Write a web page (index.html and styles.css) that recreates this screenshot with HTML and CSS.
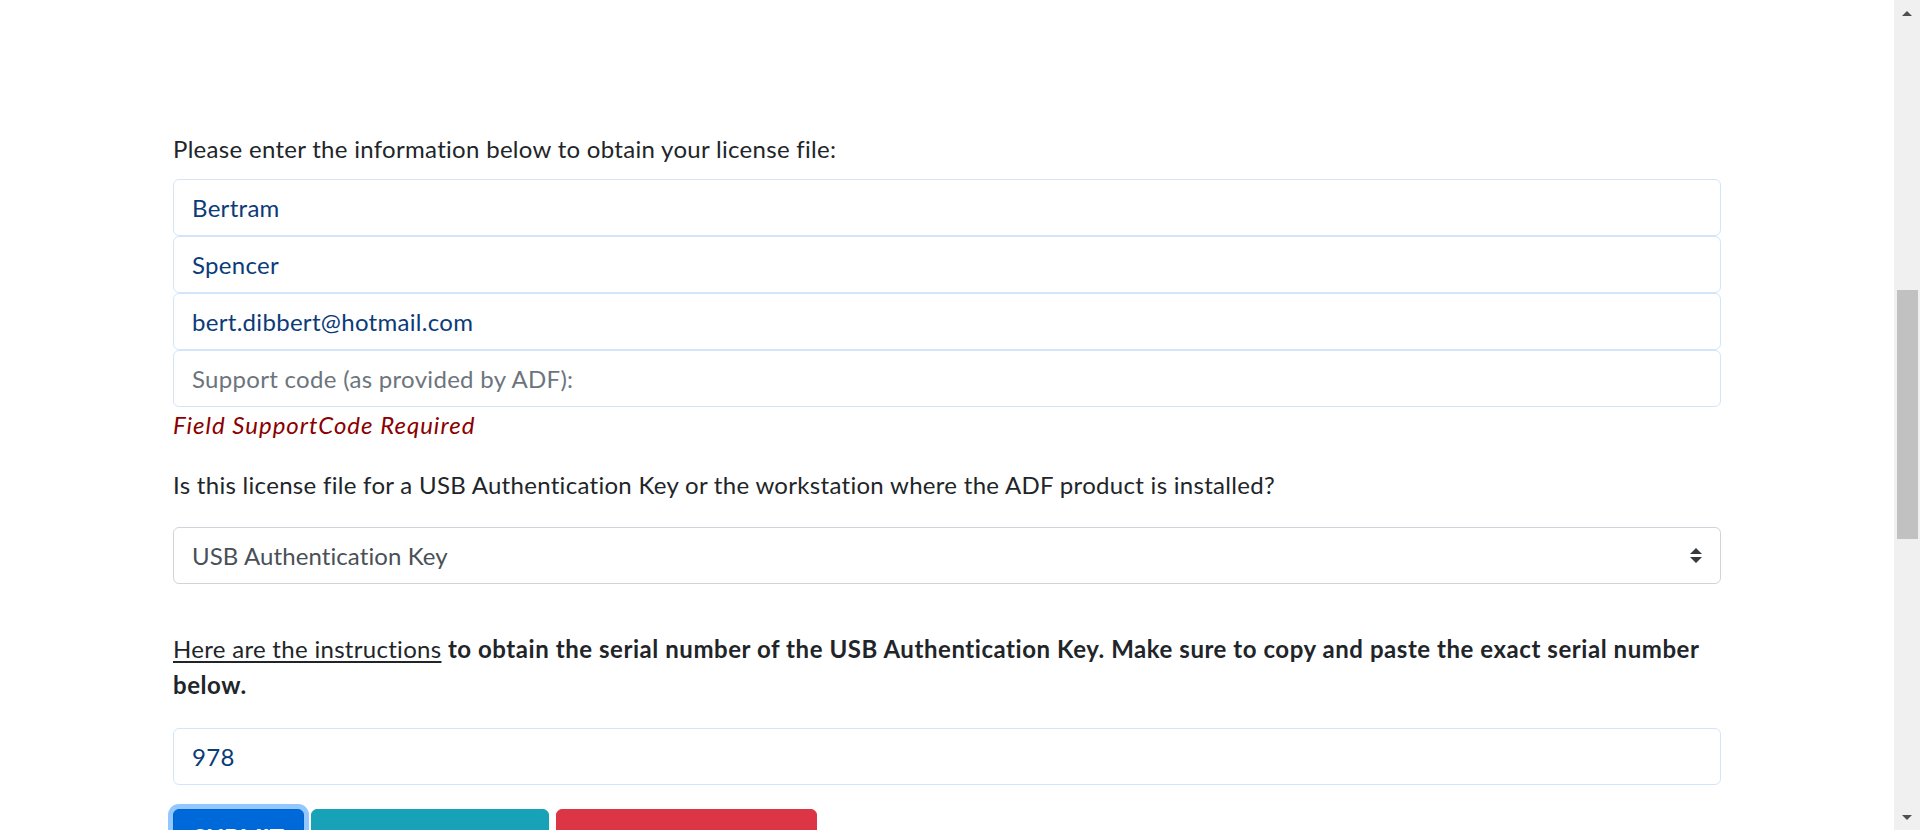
FILE: index.html
```html
<!DOCTYPE html>
<html lang="en">
<head>
<meta charset="utf-8">
<title>License request</title>
<link rel="stylesheet" href="styles.css">
</head>
<body>
<div class="screen">
  <main class="page">
    <form class="license-form">
      <label class="intro">Please enter the information below to obtain your license file:</label>
      <div class="stack">
        <input class="field" type="text" value="Bertram">
        <input class="field" type="text" value="Spencer">
        <input class="field" type="text" value="bert.dibbert@hotmail.com">
        <input class="field" type="text" placeholder="Support code (as provided by ADF):">
      </div>
      <p class="error">Field SupportCode Required</p>
      <p class="question">Is this license file for a USB Authentication Key or the workstation where the ADF product is installed?</p>
      <div class="select">
        <span class="select-value">USB Authentication Key</span>
        <svg class="select-arrow" width="12" height="15" viewBox="0 0 4 5"><path d="M2 0L0 2h4zm0 5L0 3h4z" fill="#343a40"/></svg>
      </div>
      <p class="instructions"><a class="link" href="#">Here are the instructions</a> <strong>to obtain the serial number of the USB Authentication Key. Make sure to copy and paste the exact serial number below.</strong></p>
      <input class="field serial" type="text" value="978">
      <div class="actions">
        <button class="btn btn-primary" type="button">SUBMIT</button>
        <button class="btn btn-info" type="button"><span class="btn-low">INSTRUCTIONS</span></button>
        <button class="btn btn-danger" type="button"><span class="btn-low">CANCEL</span></button>
      </div>
    </form>
  </main>
  <div class="scrollbar">
    <div class="sb-arrow">
      <svg width="10" height="5" viewBox="0 0 10 5"><path d="M0 5L5 0L10 5z" fill="#505050"/></svg>
    </div>
    <div class="sb-track"><div class="sb-thumb"></div></div>
    <div class="sb-arrow">
      <svg width="10" height="5" viewBox="0 0 10 5"><path d="M0 0L10 0L5 5z" fill="#505050"/></svg>
    </div>
  </div>
</div>
</body>
</html>
```
FILE: styles.css
```css
* { box-sizing: border-box; }
html, body { margin: 0; padding: 0; background: #fff; }
body {
  font-family: Lato, "Noto Sans", sans-serif;
  font-size: 24px;
  line-height: 36px;
  letter-spacing: 0.3px;
  color: #212529;
}
.screen {
  display: flex;
  height: 830px;
  overflow: hidden;
}
.page {
  flex: 1;
  padding: 131px 173px 0 173px;
  overflow: hidden;
}
.license-form { display: flex; flex-direction: column; }
.intro { display: block; margin-bottom: 12px; }
.stack { display: flex; flex-direction: column; }
.field {
  display: block;
  width: 100%;
  height: 57px;
  padding: 0 18px;
  font: inherit;
  font-size: 24px;
  letter-spacing: 0.3px;
  color: #0b3b78;
  background: #fff;
  border: 1px solid #d2e6fa;
  border-radius: 6px;
  outline: none;
}
.field::placeholder { color: #6c757d; opacity: 1; }
.error {
  margin: 0;
  font-style: italic;
  letter-spacing: 1px;
  color: #8b0000;
}
.question { margin: 24px 0; }
.select {
  display: flex;
  align-items: center;
  justify-content: space-between;
  height: 57px;
  padding: 0 18px;
  border: 1px solid #ced4da;
  border-radius: 6px;
  color: #495057;
  letter-spacing: 0.1px;
}
.select-arrow { display: block; }
.instructions { margin: 47px 0 25px; }
.link { color: #212529; text-decoration: underline; text-underline-offset: 3px; }
.instructions strong { font-weight: 700; letter-spacing: 0.55px; }
.actions {
  display: flex;
  gap: 7px;
  margin-top: 24px;
  align-items: flex-start;
}
.btn {
  font: inherit;
  font-size: 24px;
  font-weight: 700;
  line-height: 36px;
  color: #fff;
  border: 1px solid transparent;
  border-radius: 6px;
  padding: 9px 18px;
  min-height: 57px;
}
.btn-primary {
  width: 131px;
  background: #0069d9;
  border-color: #0062cc;
  box-shadow: 0 0 0 5px rgba(38, 143, 255, 0.5);
}
.btn-info { width: 238px; background: #17a2b8; border-color: #17a2b8; }
.btn-danger { width: 261px; background: #dc3545; border-color: #dc3545; }
.btn-low { display: block; padding-top: 30px; }
.scrollbar {
  width: 26px;
  flex: none;
  background: #f0f0f0;
  display: flex;
  flex-direction: column;
}
.sb-arrow {
  height: 26px;
  display: flex;
  align-items: center;
  justify-content: center;
}
.sb-track {
  flex: 1;
  padding: 264px 2px 0 3px;
}
.sb-thumb {
  height: 249px;
  background: #c1c1c1;
}
```
